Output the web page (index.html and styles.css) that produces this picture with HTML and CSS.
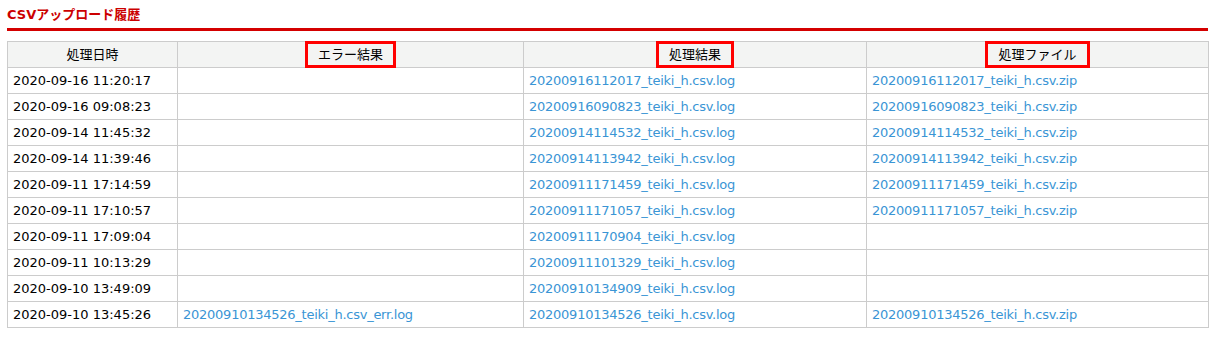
FILE: index.html
```html
<!DOCTYPE html>
<html lang="ja">
<head>
<meta charset="utf-8">
<title>CSVアップロード履歴</title>
<link rel="stylesheet" href="styles.css">
</head>
<body>
<div class="page">
  <h1 class="title">CSVアップロード履歴</h1>
  <table class="history">
    <colgroup>
      <col class="c-date"><col class="c-err"><col class="c-log"><col class="c-zip">
    </colgroup>
    <thead>
      <tr>
        <th>処理日時</th>
        <th><span class="mark">エラー結果</span></th>
        <th><span class="mark">処理結果</span></th>
        <th><span class="mark">処理ファイル</span></th>
      </tr>
    </thead>
    <tbody>
      <tr><td>2020-09-16 11:20:17</td><td></td><td><a href="#">20200916112017_teiki_h.csv.log</a></td><td><a href="#">20200916112017_teiki_h.csv.zip</a></td></tr>
      <tr><td>2020-09-16 09:08:23</td><td></td><td><a href="#">20200916090823_teiki_h.csv.log</a></td><td><a href="#">20200916090823_teiki_h.csv.zip</a></td></tr>
      <tr><td>2020-09-14 11:45:32</td><td></td><td><a href="#">20200914114532_teiki_h.csv.log</a></td><td><a href="#">20200914114532_teiki_h.csv.zip</a></td></tr>
      <tr><td>2020-09-14 11:39:46</td><td></td><td><a href="#">20200914113942_teiki_h.csv.log</a></td><td><a href="#">20200914113942_teiki_h.csv.zip</a></td></tr>
      <tr><td>2020-09-11 17:14:59</td><td></td><td><a href="#">20200911171459_teiki_h.csv.log</a></td><td><a href="#">20200911171459_teiki_h.csv.zip</a></td></tr>
      <tr><td>2020-09-11 17:10:57</td><td></td><td><a href="#">20200911171057_teiki_h.csv.log</a></td><td><a href="#">20200911171057_teiki_h.csv.zip</a></td></tr>
      <tr><td>2020-09-11 17:09:04</td><td></td><td><a href="#">20200911170904_teiki_h.csv.log</a></td><td></td></tr>
      <tr><td>2020-09-11 10:13:29</td><td></td><td><a href="#">20200911101329_teiki_h.csv.log</a></td><td></td></tr>
      <tr><td>2020-09-10 13:49:09</td><td></td><td><a href="#">20200910134909_teiki_h.csv.log</a></td><td></td></tr>
      <tr><td>2020-09-10 13:45:26</td><td><a href="#">20200910134526_teiki_h.csv_err.log</a></td><td><a href="#">20200910134526_teiki_h.csv.log</a></td><td><a href="#">20200910134526_teiki_h.csv.zip</a></td></tr>
    </tbody>
  </table>
</div>
</body>
</html>
```
FILE: styles.css
```css
html, body {
  margin: 0;
  padding: 0;
  background: #fff;
}
body {
  font-family: "DejaVu Sans", "Noto Sans CJK JP", sans-serif;
  font-size: 13px;
  color: #000;
}
.page {
  width: 1201px;
  margin-left: 7px;
}
.title {
  margin: 0 0 10px;
  padding: 6px 0 5px;
  line-height: 17px;
  font-size: 13px;
  font-weight: bold;
  color: #c00;
  border-bottom: 3px solid #d40000;
}
.history {
  width: 1201px;
  border-collapse: collapse;
  table-layout: fixed;
}
.c-date { width: 170px; }
.c-err { width: 346px; }
.c-log { width: 343px; }
.c-zip { width: 342px; }
.history th,
.history td {
  border: 1px solid #cccccc;
  height: 25px;
  padding: 0 5px;
  line-height: 17px;
  vertical-align: middle;
  white-space: nowrap;
}
.history th {
  background: #f3f4f3;
  font-weight: normal;
  text-align: center;
}
.history td {
  text-align: left;
}
.history a {
  color: #3a95d5;
  text-decoration: none;
  letter-spacing: -0.25px;
}
.mark {
  display: inline-block;
  padding: 0 10px;
  line-height: 21px;
  outline: 3px solid #ff0000;
  border-radius: 0;
}
```
